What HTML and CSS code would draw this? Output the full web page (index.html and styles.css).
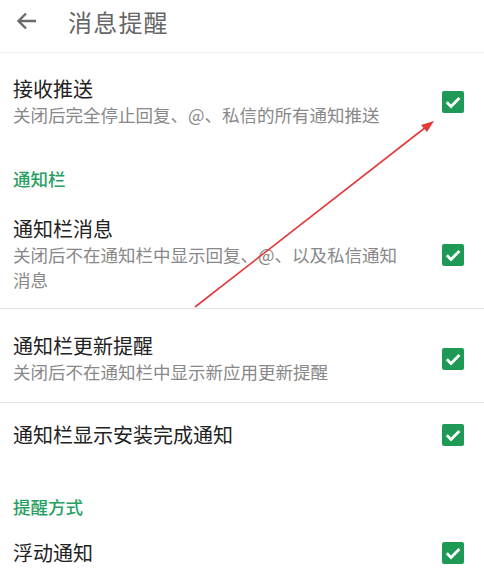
FILE: index.html
```html
<!DOCTYPE html>
<html lang="zh-CN">
<head>
<meta charset="utf-8">
<link rel="stylesheet" href="styles.css">
</head>
<body>
<div class="page">
  <header class="topbar">
    <svg class="back" width="22" height="20" viewBox="0 0 22 20"><path d="M20 10H3M10 2.5L2.5 10L10 17.5" fill="none" stroke="#6b6b6b" stroke-width="2.4" stroke-linecap="butt" stroke-linejoin="miter"/></svg>
    <h1 class="title">消息提醒</h1>
  </header>

  <div class="row first">
    <div class="text">
      <div class="name">接收推送</div>
      <div class="desc">关闭后完全停止回复、@、私信的所有通知推送</div>
    </div>
    <span class="check"><svg viewBox="0 0 22 22"><path d="M4.8 11.2l4.2 4.2L17.4 7" fill="none" stroke="#fff" stroke-width="2.8"/></svg></span>
  </div>

  <div class="section">通知栏</div>

  <div class="row after-section">
    <div class="text">
      <div class="name">通知栏消息</div>
      <div class="desc">关闭后不在通知栏中显示回复、@、以及私信通知消息</div>
    </div>
    <span class="check"><svg viewBox="0 0 22 22"><path d="M4.8 11.2l4.2 4.2L17.4 7" fill="none" stroke="#fff" stroke-width="2.8"/></svg></span>
  </div>

  <div class="row divided">
    <div class="text">
      <div class="name">通知栏更新提醒</div>
      <div class="desc">关闭后不在通知栏中显示新应用更新提醒</div>
    </div>
    <span class="check"><svg viewBox="0 0 22 22"><path d="M4.8 11.2l4.2 4.2L17.4 7" fill="none" stroke="#fff" stroke-width="2.8"/></svg></span>
  </div>

  <div class="row divided single">
    <div class="text">
      <div class="name">通知栏显示安装完成通知</div>
    </div>
    <span class="check"><svg viewBox="0 0 22 22"><path d="M4.8 11.2l4.2 4.2L17.4 7" fill="none" stroke="#fff" stroke-width="2.8"/></svg></span>
  </div>

  <div class="section second">提醒方式</div>

  <div class="row single last">
    <div class="text">
      <div class="name">浮动通知</div>
    </div>
    <span class="check"><svg viewBox="0 0 22 22"><path d="M4.8 11.2l4.2 4.2L17.4 7" fill="none" stroke="#fff" stroke-width="2.8"/></svg></span>
  </div>

  <svg class="annotation" width="484" height="583" viewBox="0 0 484 583">
    <line x1="195" y1="307" x2="426" y2="127" stroke="#e23a3a" stroke-width="1.6"/>
    <polygon points="434,121 421,125 427,132" fill="#e23a3a"/>
  </svg>
</div>
</body>
</html>
```

FILE: styles.css
```css
* { box-sizing: border-box; margin: 0; padding: 0; }
html, body { background: #fff; }
body {
  margin: 0;
  font-family: "Noto Sans CJK SC", "Noto Sans", sans-serif;
  color: #222;
}
.page {
  position: relative;
  width: 484px;
  height: 583px;
  overflow: hidden;
}
.topbar {
  height: 53px;
  border-bottom: 1px solid #f2f2f2;
  display: flex;
  align-items: center;
  padding-left: 16px;
  padding-bottom: 10px;
}
.back { flex: none; display: block; }
.title {
  margin-left: 30px;
  font-size: 24px;
  font-weight: 400;
  color: #666;
  letter-spacing: 1.2px;
}
.row {
  display: flex;
  align-items: center;
  padding: 22px 20px 16px 13px;
}
.row.first { padding-top: 24px; padding-bottom: 24px; }
.row.after-section { padding-top: 26px; }
.row.divided { border-top: 1px solid #e2e2e2; padding-top: 25px; padding-bottom: 18px; }
.row.single.divided { padding-top: 20px; padding-bottom: 24px; }
.row.last { padding-top: 22px; padding-bottom: 20px; }
.text { flex: 1; min-width: 0; padding-right: 37px; }
.name {
  font-size: 20px;
  line-height: 24px;
  color: #222;
}
.desc {
  font-size: 17.5px;
  line-height: 25px;
  color: #888;
  margin-top: 1px;
}
.check {
  flex: none;
  width: 22px;
  height: 22px;
  border-radius: 2px;
  background: #1f9a56;
  display: block;
}
.check svg { display: block; width: 22px; height: 22px; }
.section {
  padding: 16px 13px 0;
  font-size: 17.5px;
  line-height: 24px;
  font-weight: 500;
  color: #26a062;
}
.section.second { padding-top: 24px; }
.annotation {
  position: absolute;
  left: 0;
  top: 0;
  pointer-events: none;
}
```
